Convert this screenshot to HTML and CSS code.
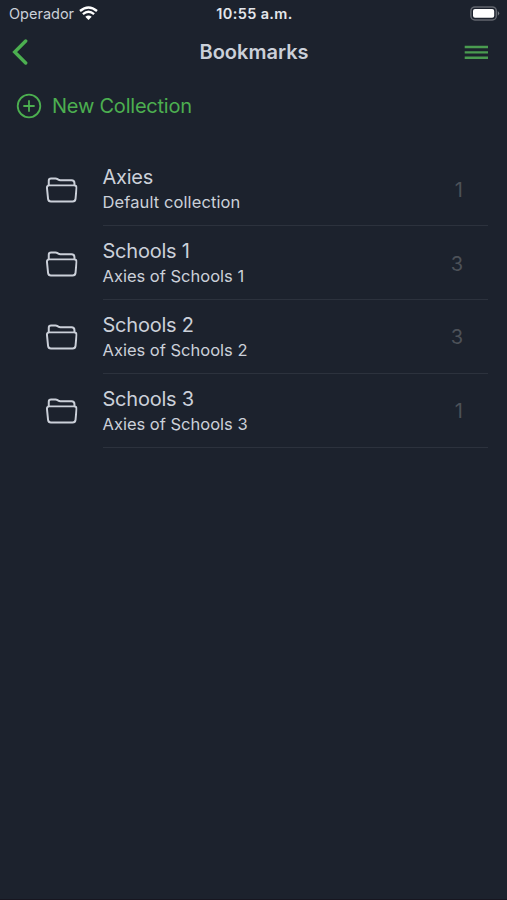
FILE: index.html
```html
<!DOCTYPE html>
<html lang="en">
<head>
<meta charset="utf-8">
<title>Bookmarks</title>
<link rel="stylesheet" href="styles.css">
</head>
<body>
<svg class="defs" width="0" height="0">
  <symbol id="folder" viewBox="0 0 32 26">
    <path d="M2.8 8V3.6Q2.8 1.3 5.2 1.3H9.6Q10.8 1.3 11.8 2L12.5 2.5Q13.4 3.1 14.6 3.1H26Q28.8 3.1 28.9 5.8V8"/>
    <path d="M3.2 8.3H28.5Q31.2 8.3 31 11L30 22Q29.7 24.7 27 24.7H5Q2.4 24.7 2.1 22L1 11Q.8 8.3 3.2 8.3Z"/>
  </symbol>
</svg>
<div class="screen">
  <header>
    <div class="status">
      <div class="carrier"><span>Operador</span>
        <svg width="19" height="15" viewBox="0 0 19 15"><path d="M1 5Q9.5-2 18 5M3.9 8.1Q9.5 3.6 15.1 8.1" fill="none" stroke="#fff" stroke-width="2.4"/><path d="M6.3 10.7Q9.5 8.1 12.7 10.7L9.5 13.9Z" fill="#fff"/></svg>
      </div>
      <time>10:55 a.m.</time>
      <svg class="battery" width="31" height="15" viewBox="0 0 31 15"><rect x="1.9" y=".9" width="25.4" height="13" rx="4" fill="none" stroke="#62666e" stroke-width="1.5"/><rect x="4" y="3" width="21.2" height="8.8" rx="2" fill="#fff"/><path d="M28.8 5Q31.6 7.3 28.8 9.7Z" fill="#777b82"/></svg>
    </div>
    <nav>
      <svg width="16" height="26" viewBox="0 0 16 26"><path d="M13.7 2L2.7 13L13.7 24" fill="none" stroke="#4caf50" stroke-width="3.4" stroke-linecap="round"/></svg>
      <h1>Bookmarks</h1>
      <svg class="menu" width="24" height="15" viewBox="0 0 24 15"><path d="M.7 2H24M.7 7.4H24M.7 12.8H24" stroke="#4a9c50" stroke-width="2.4"/></svg>
    </nav>
  </header>
  <main>
    <div class="new">
      <svg width="26" height="26" viewBox="0 0 26 26"><g fill="none" stroke="#4caf50" stroke-width="1.8" stroke-linecap="round"><circle cx="13" cy="13" r="11.3"/><path d="M13 8V18M8 13H18"/></g></svg>
      <span>New Collection</span>
    </div>
    <ul>
      <li><svg class="folder"><use href="#folder"/></svg><div class="row"><div><h2>Axies</h2><p class="wide">Default collection</p></div><span class="count">1</span></div></li>
      <li><svg class="folder"><use href="#folder"/></svg><div class="row"><div><h2>Schools 1</h2><p>Axies of Schools 1</p></div><span class="count">3</span></div></li>
      <li><svg class="folder"><use href="#folder"/></svg><div class="row"><div><h2>Schools 2</h2><p>Axies of Schools 2</p></div><span class="count">3</span></div></li>
      <li><svg class="folder"><use href="#folder"/></svg><div class="row"><div><h2>Schools 3</h2><p>Axies of Schools 3</p></div><span class="count">1</span></div></li>
    </ul>
  </main>
</div>
</body>
</html>
```
FILE: styles.css
```css
* { box-sizing: border-box; margin: 0; padding: 0; }
body { background: #1c222d; color: #cbd0d9; font-family: Inter, "Liberation Sans", sans-serif; }
svg { display: block; flex: none; }
.defs { position: absolute; }
.screen { height: 900px; border-bottom: 1px solid #171620; overflow: hidden; }
.status { display: grid; grid-template-columns: 1fr auto 1fr; align-items: center; height: 27px; padding: 0 7px 0 9px; }
.carrier { display: flex; gap: 5px; align-items: center; font-size: 14.5px; }
.status time { font-size: 14.5px; font-weight: 600; letter-spacing: .35px; color: #e3e6eb; }
.battery { justify-self: end; }
nav { display: grid; grid-template-columns: 1fr auto 1fr; align-items: center; height: 50px; padding: 0 19px 0 12px; }
nav h1 { font-size: 20px; line-height: 24px; font-weight: 600; position: relative; left: 4px; }
.menu { justify-self: end; }
.new { display: flex; align-items: center; gap: 10px; height: 58px; padding-left: 16px; color: #4caf50; font-size: 20px; letter-spacing: -.22px; }
ul { list-style: none; padding: 17.5px 19px 0 46px; }
li { display: flex; align-items: center; height: 73.75px; }
.folder { width: 31.5px; height: 26px; margin-top: 1px; fill: none; stroke: #cbd0d9; stroke-width: 2; stroke-linejoin: round; }
.row { flex: 1; display: flex; align-items: center; justify-content: space-between; height: 100%; margin-left: 25px; padding: 2px 25px 0 0; border-bottom: 1px solid #2c323d; }
h2 { font-size: 20px; line-height: 26px; font-weight: 400; letter-spacing: -.23px; }
p { font-size: 16.5px; line-height: 25px; }
.wide { letter-spacing: .1px; }
.count { color: #4c5158; font-size: 20px; }
```
